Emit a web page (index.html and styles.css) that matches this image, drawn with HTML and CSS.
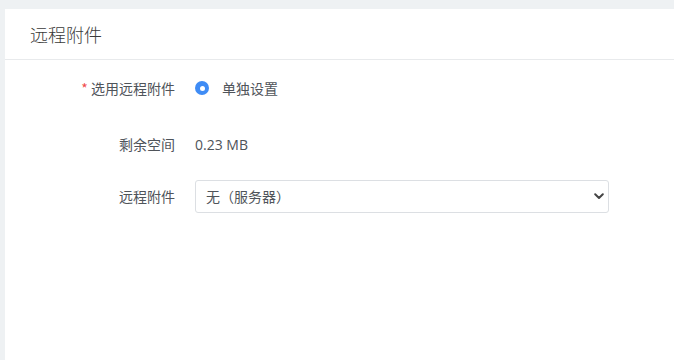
FILE: index.html
```html
<!DOCTYPE html>
<html lang="zh-CN">
<head>
<meta charset="utf-8">
<title>远程附件</title>
<link rel="stylesheet" href="styles.css">
</head>
<body>
<div class="card">
  <div class="card-header">远程附件</div>
  <div class="form">
    <div class="row row-first">
      <div class="label"><span class="req">*</span> 选用远程附件</div>
      <div class="control">
        <label class="radio">
          <span class="radio-dot"></span>
          <span class="radio-text">单独设置</span>
        </label>
      </div>
    </div>
    <div class="row row-second">
      <div class="label">剩余空间</div>
      <div class="control value">0.23 MB</div>
    </div>
    <div class="row">
      <div class="label">远程附件</div>
      <div class="control">
        <div class="select">
          <span class="select-text">无（服务器）</span>
          <svg class="chevron" width="10" height="7" viewBox="0 0 10 7"><path d="M1.2 1.3 L5 5 L8.8 1.3" fill="none" stroke="#444" stroke-width="2" stroke-linecap="round" stroke-linejoin="round"/></svg>
        </div>
      </div>
    </div>
  </div>
</div>
</body>
</html>
```
FILE: styles.css
```css
html, body {
  margin: 0;
  padding: 0;
  height: 100%;
}
body {
  background: #eef1f3;
  padding: 9px 0 0 5px;
  box-sizing: border-box;
  font-family: "Noto Sans", "Noto Sans CJK SC", sans-serif;
  color: #4f545a;
  font-size: 14px;
}
.card {
  background: #fff;
  height: 100%;
}
.card-header {
  height: 50px;
  line-height: 50px;
  padding-left: 25px;
  font-size: 18px;
  color: #3a3a3a;
  border-bottom: 1px solid #e8eaec;
  font-family: "Noto Sans CJK SC", sans-serif;
  font-weight: 300;
}
.form {
  padding-top: 12px;
}
.row {
  display: flex;
  align-items: center;
  height: 32px;
}
.row-first { margin-bottom: 24px; }
.row-second { margin-bottom: 20px; }
.label {
  width: 170px;
  text-align: right;
  padding-right: 20px;
  box-sizing: content-box;
  font-family: "Noto Sans CJK SC", sans-serif;
  color: #4f545a;
}
.req {
  color: #f04b4b;
}
.control {
  display: flex;
  align-items: center;
}
.value {
  font-family: "Open Sans", "Noto Sans", sans-serif;
  font-size: 14px;
  color: #4f545a;
}
.radio {
  display: flex;
  align-items: center;
}
.radio-dot {
  width: 14px;
  height: 14px;
  border-radius: 50%;
  background: #3f8cf5;
  display: flex;
  align-items: center;
  justify-content: center;
  margin-right: 13px;
}
.radio-dot::after {
  content: "";
  width: 5px;
  height: 5px;
  border-radius: 50%;
  background: #fff;
}
.radio-text {
  font-family: "Noto Sans CJK SC", sans-serif;
  color: #4f545a;
}
.select {
  width: 414px;
  height: 33px;
  box-sizing: border-box;
  border: 1px solid #dcdfe3;
  border-radius: 3px;
  display: flex;
  align-items: center;
  justify-content: space-between;
  padding: 0 4px 0 10px;
}
.select-text {
  font-family: "Noto Sans CJK SC", sans-serif;
  color: #4f545a;
}
.chevron {
  display: block;
}
```
